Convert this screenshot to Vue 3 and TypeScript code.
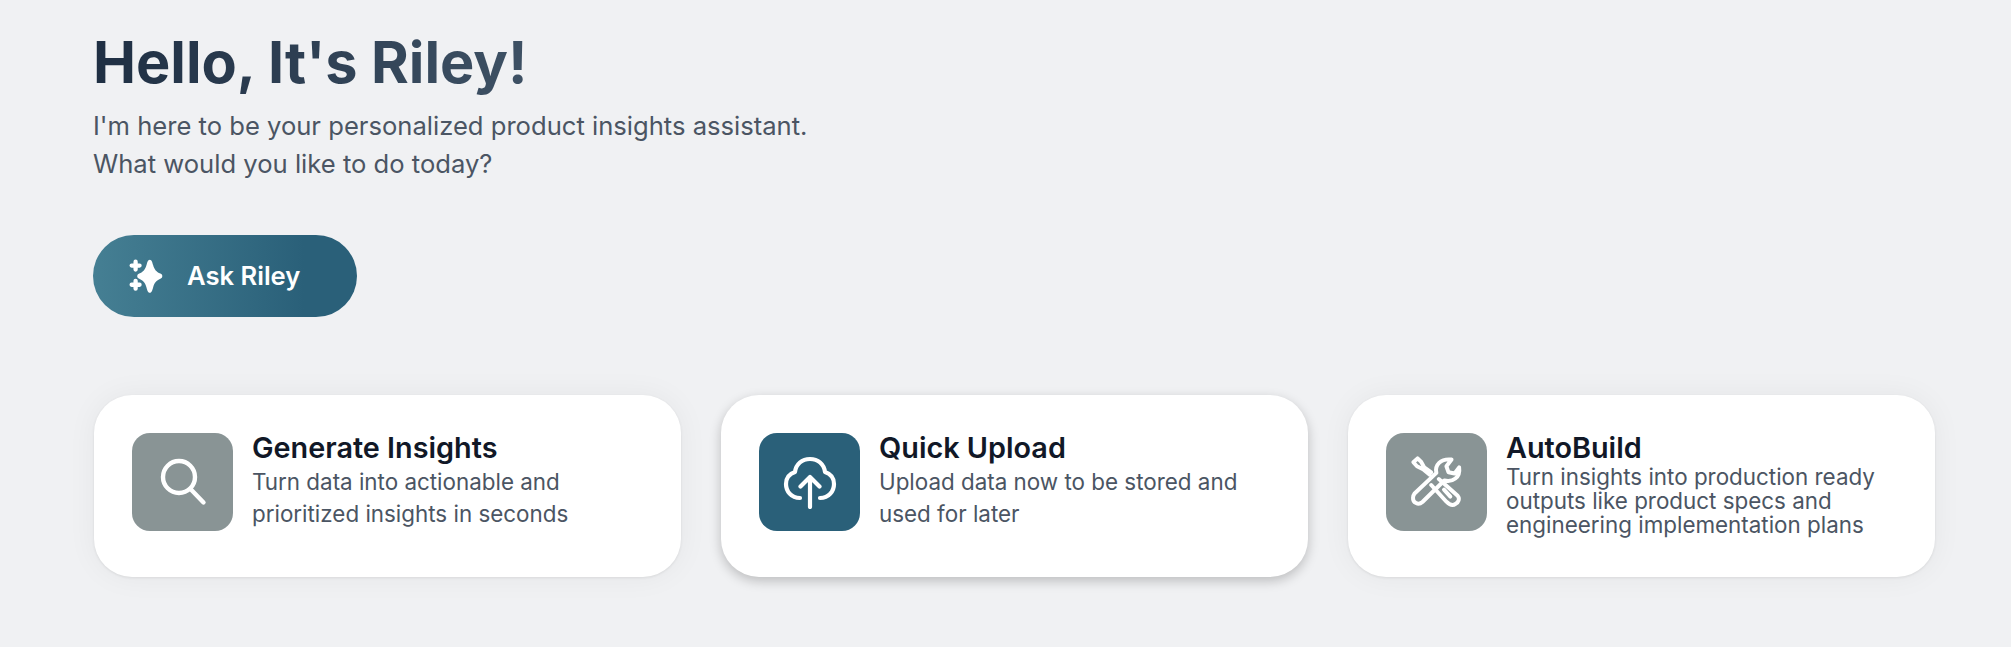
<script setup lang="ts">
interface Card { title: string; lines: string[]; active?: boolean; tight?: boolean; icon: string }
const cards: Card[] = [
  { title: 'Generate Insights', lines: ['Turn data into actionable and', 'prioritized insights in seconds'], icon: 'search' },
  { title: 'Quick Upload', lines: ['Upload data now to be stored and', 'used for later'], active: true, icon: 'upload' },
  { title: 'AutoBuild', lines: ['Turn insights into production ready', 'outputs like product specs and', 'engineering implementation plans'], tight: true, icon: 'tools' },
]
</script>

<template>
  <main class="page">
    <h1 class="heading">Hello, It's Riley!</h1>
    <p class="intro">I'm here to be your personalized product insights assistant.<br />What would you like to do today?</p>
    <button class="ask" type="button">
      <svg class="spark" viewBox="27 27 103 103">
        <path fill="#fff" d="M90 29C96 29 98 38 100 45C104 59 110 66 122 71C130 74 130 84 122 87C110 92 104 99 100 113C98 120 96 129 90 129C84 129 82 120 80 113C76 99 70 92 58 87C50 84 50 74 58 71C70 66 76 59 80 45C82 38 84 29 90 29Z" />
        <path fill="none" stroke="#fff" stroke-width="13" stroke-linecap="round" d="M47 35V59M35 47H59M47 93V117M35 105H59" />
      </svg>
      <span>Ask Riley</span>
    </button>
    <section class="cards">
      <article v-for="card in cards" :key="card.title" class="card" :class="{ active: card.active }">
        <div class="tile">
          <svg v-if="card.icon === 'search'" class="glyph" viewBox="0 0 54 54" fill="none" stroke="#fff" stroke-width="4.400" stroke-linecap="round">
            <circle cx="23" cy="22" r="16" />
            <path d="M34.500 34l13 13.500" />
          </svg>
          <svg v-else-if="card.icon === 'upload'" class="glyph" viewBox="0 -2 54 54" fill="none" stroke="#fff" stroke-width="4.200" stroke-linecap="round" stroke-linejoin="round">
            <path d="M17 41C8 41 3 34 3 27C3 21 6 17 12 15C13 7 19 2 27 2C35 2 41 7 42 15C48 17 51 21 51 27C51 34 46 41 37 41" />
            <path d="M27 50V20M17.500 29.500L27 20L36.500 29.500" />
          </svg>
          <svg v-else class="glyph" viewBox="85 71 178 178" fill="none" stroke="#fff" stroke-width="13" stroke-linecap="round" stroke-linejoin="round">
            <path d="M150 136L128 118L108 108L96 95L110 82L122 94L132 112L155 128" />
            <path d="M180 150L242 205C250 215 245 228 235 232C225 240 215 235 205 225L155 170" />
            <path d="M197 185L218 208" />
            <path d="M100 198L172 130C166 105 185 82 222 86L205 108L212 128L232 132L247 112C252 145 225 162 198 155L126 226C112 238 94 228 95 212C95 206 97 202 100 198Z" />
          </svg>
        </div>
        <div class="copy" :class="{ tight: card.tight }">
          <h2 class="title">{{ card.title }}</h2>
          <p class="desc">
            <template v-for="(line, i) in card.lines" :key="i"><br v-if="i" />{{ line }}</template>
          </p>
        </div>
      </article>
    </section>
  </main>
</template>

<style scoped>
.page {
  box-sizing: border-box;
  width: 2011px;
  height: 647px;
  padding: 26px 0 0 93px;
  background: #f0f1f3;
  font-family: Inter, "Liberation Sans", sans-serif;
  overflow: hidden;
}
.heading {
  margin: 0;
  width: max-content;
  font-size: 57.600px;
  line-height: 72px;
  font-weight: 700;
  background: linear-gradient(90deg, #1f2f43, #3e5164);
  -webkit-background-clip: text;
  background-clip: text;
  color: transparent;
}
.intro {
  margin: 9px 0 0;
  font-size: 25.600px;
  line-height: 38.400px;
  color: #4b5563;
}
.ask {
  margin-top: 51px;
  display: flex;
  align-items: center;
  width: 264px;
  height: 82px;
  padding: 0 0 0 36px;
  gap: 24px;
  border: 0;
  border-radius: 41px;
  background: linear-gradient(90deg, #457f93, #2a6079 80%);
  color: #fff;
  font: 600 25.600px Inter, "Liberation Sans", sans-serif;
}
.spark { width: 34px; height: 34px; flex: none; }
.cards {
  margin: 78px 0 0 1px;
  display: grid;
  grid-template-columns: repeat(3, 587px);
  gap: 40px;
}
.card {
  box-sizing: border-box;
  height: 182px;
  padding: 38px 30px 0 38px;
  display: flex;
  align-items: flex-start;
  gap: 19px;
  background: #fff;
  border-radius: 38px;
  box-shadow: 0 1px 3px rgba(0, 0, 0, 0.08), 0 0 30px rgba(0, 0, 0, 0.05);
}
.card.active { box-shadow: 0 4px 12px rgba(0, 0, 0, 0.22); }
.tile {
  flex: none;
  width: 101px;
  height: 98px;
  border-radius: 18px;
  background: #899495;
  display: flex;
  align-items: center;
  justify-content: center;
}
.active .tile { background: #2a6079; }
.glyph { width: 54px; height: 54px; }
.copy { margin-top: -3px; }
.title {
  margin: 0;
  font-size: 28.800px;
  line-height: 36px;
  font-weight: 600;
  color: #111827;
}
.desc {
  margin: 0;
  font-size: 22.400px;
  line-height: 32px;
  color: #4b5563;
}
.tight .desc { line-height: 24.300px; margin-top: -1px; }
</style>
